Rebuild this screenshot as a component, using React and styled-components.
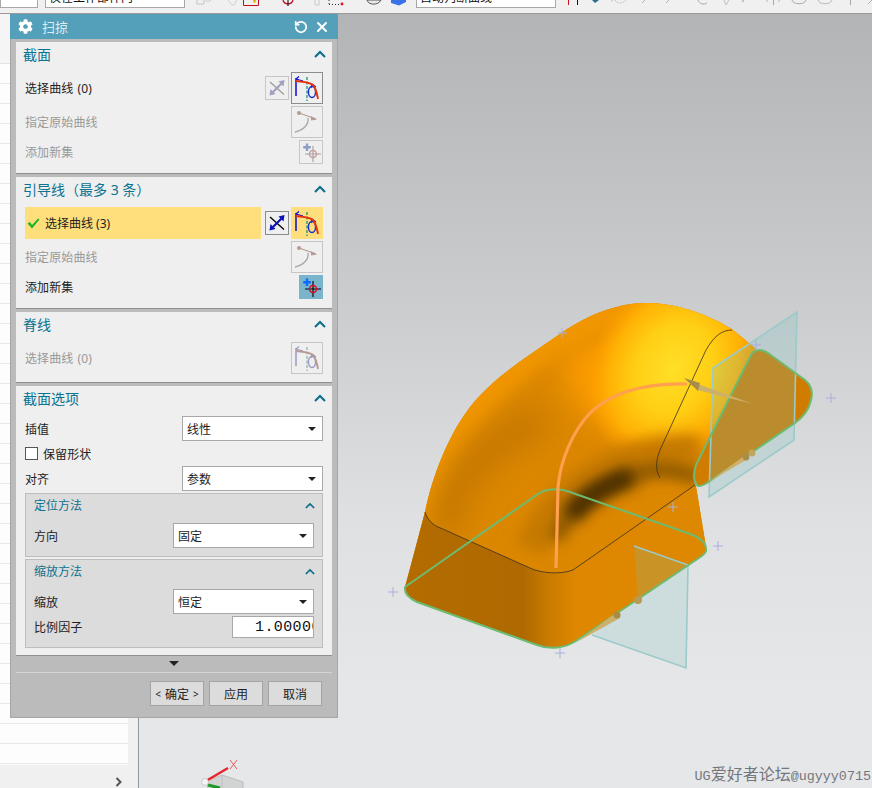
import React from 'react';
import styled, { createGlobalStyle } from 'styled-components';
import { FaCog } from 'react-icons/fa';
import { RotateCcw, X } from 'lucide-react';

const GlobalStyle = createGlobalStyle`
	html, body {
		margin: 0;
		padding: 0;
		background: #f0f0f0;
	}
	* {
		box-sizing: border-box;
	}
`;

const uiFont = `"Noto Sans", "Noto Sans CJK SC", sans-serif`;

/* icons drawn from the reference, one palette per state */
const palettes = {
	on: { blue: '#0a0ad8', red: '#e8300a', teal: '#0a8a7a', circle: '#1030d0' },
	off: { blue: '#9a9ac4', red: '#b89a94', teal: '#8fb0b0', circle: '#9a9ac4' },
};

const CurveIcon = ({ state = 'on' }) => {
	const c = palettes[state];
	return (
		<svg width='30' height='30' viewBox='1 1 30 30' fill='none'>
			<path d='M5 6V24' stroke={c.blue} strokeWidth='1.5' />
			<path d='M5 7L12 9M5 7L8 4.5' stroke={c.blue} strokeWidth='1.3' />
			<path d='M16 5V29' stroke={c.teal} strokeWidth='1.2' strokeDasharray='3 1.5' />
			<ellipse cx='21' cy='20' rx='3.6' ry='5.5' stroke={c.circle} strokeWidth='1.5' />
			<path d='M21 12L25 15M21 12L20 16' stroke={c.circle} strokeWidth='1.2' />
			<path d='M5 9C12 10 18 10 22 13C25 16 26 22 27 27' stroke={c.red} strokeWidth='1.9' />
		</svg>
	);
};

const OriginIcon = () => (
	<svg width='30' height='30' viewBox='1 1 30 30' fill='none'>
		<circle cx='8' cy='7' r='2' fill='#b89a94' />
		<path d='M8 7L25 13' stroke='#b89a94' strokeWidth='1.2' />
		<path d='M20 10L26 13.5L20 14.5Z' fill='#b89a94' />
		<path d='M17 12C18 18 13 24 4 26' stroke='#a8a8a8' strokeWidth='1.3' />
	</svg>
);

const AddSetIcon = ({ state = 'on' }) => {
	const on = state === 'on';
	const plus = on ? '#0a6cff' : '#8f9ec4';
	const cross = on ? '#000' : '#a0a0a0';
	const ring = on ? '#e00a20' : '#c8a0a0';
	return (
		<svg width='22' height='22' viewBox='1 1 22 22' fill='none'>
			<path d='M8 3.5V11M4.2 7.2H11.8' stroke={plus} strokeWidth='2.4' />
			<path d='M6 14H22M14 6V22' stroke={cross} strokeWidth='1.1' />
			<circle cx='14' cy='14' r='3.5' stroke={ring} strokeWidth='1.5' />
		</svg>
	);
};

const ReverseIcon = ({ state = 'on' }) => {
	const on = state === 'on';
	const line = on ? '#000' : '#9c9c9c';
	const arrow = on ? '#0a10b8' : '#a0a0c0';
	return (
		<svg width='22' height='22' viewBox='1 1 22 22' fill='none'>
			<path d='M5 6L19 18.5' stroke={line} strokeWidth='1.3' />
			<path d='M8 16L17 7' stroke={arrow} strokeWidth='2.2' />
			<path d='M19.5 4L18.5 10.5L13.5 5.5Z' fill={arrow} />
			<path d='M4.5 19.5L5.5 13L10.5 18Z' fill={arrow} />
		</svg>
	);
};

const Chevron = ({ small }) => (
	<svg width={small ? 10 : 12} height={small ? 7 : 8} viewBox='0 0 12 8' fill='none'>
		<path d='M1 7L6 2L11 7' stroke='#0b6c8a' strokeWidth='2' />
	</svg>
);

const CheckMark = () => (
	<svg width='13' height='11' viewBox='0 0 13 11'>
		<path d='M0.5 5.5L3 4L5 7L11 0.5L12.5 1.5L5 10.5Z' fill='#1fb52c' />
	</svg>
);

const Select = ({ value }) => (
	<SelectBox>
		{value}
		<Caret />
	</SelectBox>
);

/* top edge of the toolbars, only the lower few pixels of each icon show */
const ToolsLeft = () => (
	<svg width='231' height='13' viewBox='184 0 231 13' fill='none'>
		<path d='M196 0V4H203V0M205 0C205 2 208 2 210 0' stroke='#c4c4c4' />
		<path d='M227 0L231 5H233L236 0' stroke='#d0d0d0' />
		<path d='M242.5 0V5.5H257.5V0' stroke='#c01020' />
		<path d='M252 0H255V1L254 3H253L252 1Z' fill='#f0b010' />
		<path d='M282 0C283 5 291 5 292 0' stroke='#c01020' strokeWidth='1.3' />
		<path d='M287 0V6' stroke='#000' />
		<path d='M314 0V5M318 0V5H314' stroke='#c8c8c8' />
		<path d='M328 4.5H340' stroke='#333' strokeDasharray='1 2' />
		<path d='M328 0V4' stroke='#333' strokeDasharray='1 2' />
		<circle cx='341' cy='4' r='1.4' fill='#e01020' />
		<path d='M366 0C367 5 377 6 380 0Z' fill='#e8e8e8' stroke='#555' />
		<path d='M390 0H405V2L398 5.5L390 3Z' fill='#3a70e8' />
	</svg>
);

const ToolsRight = () => (
	<svg width='318' height='13' viewBox='554 0 318 13' fill='none'>
		<path d='M566.5 0V5' stroke='#d01020' />
		<path d='M575.5 0V5' stroke='#111' />
		<path d='M590 0H597L593 3Z' fill='#2a6a90' />
		<path d='M613 0C615 4 621 4 624 0M610 0V3' stroke='#c0c0c0' strokeDasharray='2 1' />
		<path d='M640 3L643 0M664 3L667 0' stroke='#b0b0b0' />
		<path d='M696 0C697 4 702 5 705 3' stroke='#a8a8a8' />
		<path d='M722 0L724 5L727 0' stroke='#c0c0c0' />
		<circle cx='741' cy='1' r='1.2' fill='#c0c0c0' />
		<path d='M771.5 0V5' stroke='#a8a8a8' />
		<path d='M764 1H766M776 1H778' stroke='#b8b8b8' />
		<path d='M790 0C791 5 803 5 804 0' stroke='#a8a8a8' />
		<path d='M816 0C817 5 829 5 830 0' stroke='#b8b8b8' />
		<path d='M848.5 0V5' stroke='#a8a8a8' />
		<path d='M866 4L870 0' stroke='#b0b0b0' />
	</svg>
);

/* plus marks left by the sweep preview, page coordinates */
const plusMarks = [
	[562, 333],
	[756, 345],
	[831, 398],
	[673, 507],
	[718, 546],
	[393, 592],
	[560, 653],
];

const bodyPath =
	'M405 587L425 512C432 478 447 437 470 407C490 381 520 361 557 336C585 316 615 303 647 303C680 303 715 318 733 330L756 349L752 353L696 465C693 474 693 480 696 486L706 547C706 551 705 553 702 556L576 641C565 648 550 650 537 645L417 602C408 598 404 593 405 587Z';

const blurBox = { filterUnits: 'userSpaceOnUse', x: 139, y: 14, width: 733, height: 774 };

const SweepModel = () => (
	<ModelSvg viewBox='139 14 733 774' fill='none'>
		<defs>
			<clipPath id='bodyClip'>
				<path d={bodyPath} />
			</clipPath>
			<radialGradient id='glow' cx='0.5' cy='0.5' r='0.5'>
				<stop offset='0' stopColor='#ffdf28' />
				<stop offset='0.45' stopColor='#ffcf14' />
				<stop offset='0.75' stopColor='#ffb204' />
				<stop offset='1' stopColor='#ffa000' stopOpacity='0' />
			</radialGradient>
			<linearGradient id='skirt' gradientUnits='userSpaceOnUse' x1='405' y1='560' x2='700' y2='560'>
				<stop offset='0' stopColor='#b46c00' />
				<stop offset='0.4' stopColor='#ae6900' />
				<stop offset='0.48' stopColor='#c87a00' />
				<stop offset='0.58' stopColor='#df8700' />
				<stop offset='1' stopColor='#de8700' />
			</linearGradient>
			<filter id='soft' {...blurBox}>
				<feGaussianBlur stdDeviation='7' />
			</filter>
			<filter id='softer' {...blurBox}>
				<feGaussianBlur stdDeviation='14' />
			</filter>
		</defs>

		{/* bend surface, shaded in bands that follow the spine */}
		<path d={bodyPath} fill='#dc8700' />
		<g clipPath='url(#bodyClip)'>
			<path
				d='M415 530C430 440 490 370 570 325C630 290 700 310 770 350'
				stroke='#f09500'
				strokeWidth='40'
				filter='url(#soft)'
			/>
			<path d='M560 360L680 290L750 340L720 450L630 440L580 410Z' fill='#fb9c00' filter='url(#softer)' />
			<path d='M442 535C452 480 482 445 545 418' stroke='#c87a00' strokeWidth='40' filter='url(#softer)' />
			<ellipse cx='674' cy='368' rx='82' ry='104' transform='rotate(28 674 368)' fill='url(#glow)' />
			<path d='M530 550C555 490 615 448 700 450' stroke='#c67900' strokeWidth='32' filter='url(#soft)' />
			<path
				d='M555 540C570 505 610 478 657 470C670 469 682 472 700 478'
				stroke='#8a5600'
				strokeWidth='15'
				filter='url(#soft)'
			/>
			<path d='M570 516C586 496 605 485 632 476' stroke='#4a2e00' strokeWidth='20' filter='url(#soft)' />
			<path
				d='M400 505L425 512C427 518 430 522 436 526L530 568C540 573 560 575 573 570L695 485L720 560L570 660L400 610Z'
				fill='url(#skirt)'
			/>
		</g>

		{/* seams */}
		<path
			d='M425 512C427 518 430 522 436 526L530 568C540 573 560 575 573 570L695 485'
			stroke='#3a3020'
			strokeWidth='0.8'
		/>
		<path
			d='M732 330C722 330 714 336 706 350L660 450C656 460 655 470 660 478'
			stroke='#3a3020'
			strokeWidth='0.8'
		/>

		{/* end cap */}
		<path
			d='M752 353C757 349 762 349 768 353L805 380C812 386 813 393 811 400C809 410 802 418 795 423L707 483C702 486 698 487 697 485C693 480 693 474 696 465Z'
			fill='#d07c00'
		/>

		{/* section planes */}
		<path d='M713 368L797 312L794 440L709 497Z' fill='#7bc2be' fillOpacity='0.24' />
		<path d='M713 368L797 312L794 440L709 497Z' stroke='#9ccaca' strokeWidth='1.6' />
		<path d='M634 546L688 565L638 600Z' fill='#7bc2be' fillOpacity='0.2' />
		<path d='M688 565L686 668L592 635L638 600Z' fill='#cddcdd' />
		<path d='M634 546L688 565L686 668L592 635' stroke='#9ccaca' strokeWidth='1.6' />

		{/* section outlines */}
		<path
			d='M405 587L538 494C545 489 558 488 567 491L693 535C702 539 707 544 706 551C705 554 702 556 699 558L576 641C565 648 550 650 537 645L417 602C408 598 404 593 405 587Z'
			stroke='#6dbb70'
			strokeWidth='2'
		/>
		<path
			d='M752 353C757 349 762 349 768 353L805 380C812 386 813 393 811 400C809 410 802 418 795 423L707 483C702 486 698 487 697 485C693 480 693 474 696 465Z'
			stroke='#6dbb70'
			strokeWidth='2'
		/>

		{/* guide spine */}
		<path
			d='M556 568L558 487C560 462 572 432 590 413C610 394 640 383 687 384'
			stroke='#ffa04e'
			strokeWidth='3.2'
		/>

		{/* direction arrows */}
		<path d='M698 384L753 404L697 390Z' fill='#cdb06a' />
		<path d='M684 378L700 383L698 391Z' fill='#a88c4a' />
		<path d='M707 483L744 456L746 460Z' fill='#cdb06a' />
		<circle cx='746' cy='457' r='3.4' fill='#a88c4a' />
		<circle cx='752' cy='453' r='3.4' fill='#c2a55c' />
		<path d='M577 642L617 612L620 618Z' fill='#cdb06a' />
		<circle cx='617' cy='615' r='3.6' fill='#a88c4a' />
		<circle cx='638' cy='600' r='4' fill='#b89a50' />

		{plusMarks.map(([x, y]) => (
			<path
				key={`${x}-${y}`}
				d={`M${x - 5} ${y}H${x + 5}M${x} ${y - 5}V${y + 5}`}
				stroke='#aaaedd'
				strokeWidth='1'
			/>
		))}

		{/* view triad */}
		<path d='M222 775L243 782L243 790L208 790L207 781Z' fill='#d2d3d3' stroke='#bcbcbc' strokeWidth='1' />
		<path d='M222 775L222 790' stroke='#c0c0c0' />
		<path d='M206 781L228 768' stroke='#e8252c' strokeWidth='2.4' />
		<path d='M230 760L237 769M237 760L230 769' stroke='#e8454c' strokeWidth='0.9' />
		<path d='M208 785L220 788' stroke='#1f9a2a' strokeWidth='3' />
		<circle cx='205' cy='782' r='3.5' fill='#f4f4f4' stroke='#b0b0b0' strokeWidth='0.6' />
	</ModelSvg>
);

const treeRows = Array.from({ length: 35 });

const App = () => {
	return (
		<Page>
			<GlobalStyle />

			{/* toolbar, clipped by the capture */}
			<Toolbar>
				<Combo $width={38} $gap={7} />
				<Combo $width={140}>仅在工作部件内</Combo>
				<ToolsLeft />
				<Combo $width={140}>自动判断曲线</Combo>
				<ToolsRight />
			</Toolbar>

			<Workspace>
				<TreePanel>
					<TreeHead />
					<TreeRows>
						{treeRows.map((_, i) => (
							<TreeRow key={i} />
						))}
					</TreeRows>
					<TreeScroll>
						<ScrollArrow viewBox='0 0 8 10'>
							<path d='M1.5 1L5.5 5L1.5 9' stroke='#555' strokeWidth='2' fill='none' />
						</ScrollArrow>
					</TreeScroll>
				</TreePanel>
				<Splitter />
				<Viewport>
					<SweepModel />
					<Watermark>
						UG<WatermarkCjk>爱好者论坛</WatermarkCjk>@ugyyy0715
					</Watermark>
				</Viewport>
			</Workspace>

			{/* sweep dialog */}
			<Dialog>
				<TitleBar>
					<TitleLeft>
						<FaCog size={15} />
						<span>扫掠</span>
					</TitleLeft>
					<TitleRight>
						<RotateCcw size={14} strokeWidth={3} />
						<X size={16} strokeWidth={3} />
					</TitleRight>
				</TitleBar>

				<DialogBody>
					<Section>
						<SectionHead>
							<SectionTitle>截面</SectionTitle>
							<Chevron />
						</SectionHead>
						<Rows>
							<Row>
								<Label>选择曲线 (0)</Label>
								<Tools>
									<SmallButton>
										<ReverseIcon state='off' />
									</SmallButton>
									<BigButton $state='selected'>
										<CurveIcon />
									</BigButton>
								</Tools>
							</Row>
							<Row>
								<Label $muted>指定原始曲线</Label>
								<BigButton>
									<OriginIcon />
								</BigButton>
							</Row>
							<Row>
								<Label $muted>添加新集</Label>
								<SmallButton>
									<AddSetIcon state='off' />
								</SmallButton>
							</Row>
						</Rows>
					</Section>

					<Section>
						<SectionHead>
							<SectionTitle>引导线（最多 3 条）</SectionTitle>
							<Chevron />
						</SectionHead>
						<Rows>
							<Row>
								<ActiveLabel>
									<CheckMark />
									<span>选择曲线 (3)</span>
								</ActiveLabel>
								<Tools>
									<SmallButton $state='strong'>
										<ReverseIcon />
									</SmallButton>
									<BigButton $state='active'>
										<CurveIcon />
									</BigButton>
								</Tools>
							</Row>
							<Row>
								<Label $muted>指定原始曲线</Label>
								<BigButton>
									<OriginIcon />
								</BigButton>
							</Row>
							<Row>
								<Label>添加新集</Label>
								<SmallButton $state='pressed'>
									<AddSetIcon />
								</SmallButton>
							</Row>
						</Rows>
					</Section>

					<Section $bottom={8}>
						<SectionHead>
							<SectionTitle>脊线</SectionTitle>
							<Chevron />
						</SectionHead>
						<Rows>
							<Row>
								<Label $muted>选择曲线 (0)</Label>
								<BigButton>
									<CurveIcon state='off' />
								</BigButton>
							</Row>
						</Rows>
					</Section>

					<Section $bottom={7}>
						<SectionHead>
							<SectionTitle>截面选项</SectionTitle>
							<Chevron />
						</SectionHead>
						<OptionRow>
							<Label>插值</Label>
							<Select value='线性' />
						</OptionRow>
						<CheckRow>
							<CheckBox />
							<Label>保留形状</Label>
						</CheckRow>
						<OptionRow>
							<Label>对齐</Label>
							<Select value='参数' />
						</OptionRow>

						<SubPanel>
							<SubHead>
								<SubTitle>定位方法</SubTitle>
								<Chevron small />
							</SubHead>
							<OptionRow>
								<Label>方向</Label>
								<Select value='固定' />
							</OptionRow>
						</SubPanel>

						<SubPanel $last>
							<SubHead>
								<SubTitle>缩放方法</SubTitle>
								<Chevron small />
							</SubHead>
							<OptionRow>
								<Label>缩放</Label>
								<Select value='恒定' />
							</OptionRow>
							<FactorRow>
								<Label>比例因子</Label>
								<NumberBox>1.00000</NumberBox>
							</FactorRow>
						</SubPanel>
					</Section>
				</DialogBody>

				<MoreRow>
					<MoreCaret />
				</MoreRow>
				<Footer>
					<FooterButton>
						<Angle>&lt;</Angle>确定<Angle>&gt;</Angle>
					</FooterButton>
					<FooterButton>应用</FooterButton>
					<FooterButton>取消</FooterButton>
				</Footer>
			</Dialog>
		</Page>
	);
};

export default App;

const Page = styled.div`
	position: relative;
	display: flex;
	flex-direction: column;
	width: 872px;
	height: 788px;
	overflow: hidden;
	font-family: ${uiFont};
	font-size: 12px;
	color: #222;
`;

const Toolbar = styled.div`
	display: flex;
	align-items: flex-end;
	flex: none;
	height: 14px;
	overflow: hidden;
	background: #f0f0f0;
	border-bottom: 1px solid #9a9a9a;

	> svg {
		flex: none;
		align-self: flex-start;
	}
`;

const Combo = styled.div`
	flex: none;
	width: ${(p) => p.$width}px;
	height: 20px;
	margin-right: ${(p) => p.$gap || 0}px;
	margin-bottom: 5px;
	padding: 0 3px;
	line-height: 18px;
	white-space: nowrap;
	overflow: hidden;
	background: #fff;
	border: 1px solid #a8a8a8;
	color: #111;
`;

const Workspace = styled.div`
	display: flex;
	flex: 1;
	min-height: 0;
`;

const TreePanel = styled.div`
	display: flex;
	flex-direction: column;
	flex: none;
	width: 128px;
	background: #fdfdfd;
`;

const TreeHead = styled.div`
	flex: none;
	height: 50px;
	background: #f5f5f5;
	border-bottom: 1px solid #e2e2e2;
`;

const TreeRows = styled.div`
	flex: 1;
	min-height: 0;
	overflow: hidden;
`;

const TreeRow = styled.div`
	height: 20px;
	border-bottom: 1px solid #e8e8e8;
`;

const TreeScroll = styled.div`
	display: flex;
	align-items: center;
	justify-content: flex-end;
	flex: none;
	height: 23px;
	padding: 10px 5px 0 0;
	background: #f0f0f0;
`;

const ScrollArrow = styled.svg`
	width: 8px;
	height: 10px;
`;

const Splitter = styled.div`
	flex: none;
	width: 11px;
	background: #f0f0f0;
	border-right: 1px solid #8c9aa0;
`;

const Viewport = styled.div`
	position: relative;
	flex: 1;
	background: linear-gradient(180deg, #b3b4b6 0%, #cbccce 37%, #dfe0e2 65%, #e6e7e9 88%);
`;

const ModelSvg = styled.svg`
	display: block;
	width: 100%;
	height: 100%;
`;

const Watermark = styled.div`
	position: absolute;
	right: 1px;
	bottom: 3px;
	font-family: 'Liberation Mono', 'Noto Sans CJK SC', monospace;
	font-size: 13.4px;
	line-height: 16px;
	white-space: nowrap;
	color: #73777d;
`;

const WatermarkCjk = styled.span`
	font-size: 16px;
`;

const Dialog = styled.div`
	position: absolute;
	left: 10px;
	top: 14px;
	width: 328px;
	height: 704px;
	background: #bbbbbb;
	border: 1px solid #a6a6a6;
	border-top: 0;
`;

const TitleBar = styled.div`
	display: flex;
	align-items: center;
	justify-content: space-between;
	height: 25px;
	margin: 0 -1px;
	padding: 0 8px 0 8px;
	background: #549fb9;
	color: #fff;
`;

const TitleLeft = styled.div`
	display: flex;
	align-items: center;
	gap: 9px;

	> span {
		font-size: 13px;
		color: #dcecf2;
	}
`;

const TitleRight = styled.div`
	display: flex;
	align-items: center;
	gap: 6px;
`;

const DialogBody = styled.div`
	display: flex;
	flex-direction: column;
	gap: 3px;
	padding: 3px 5px 0;
`;

const Section = styled.section`
	padding: 0 9px ${(p) => p.$bottom ?? 9}px 9px;
	background: #efefef;
	border-bottom: 1px solid #8f8f8f;
`;

const SectionHead = styled.div`
	display: flex;
	align-items: center;
	justify-content: space-between;
	height: 30px;
	margin: 0 -3px 0 -2px;
	padding-bottom: 6px;
`;

const SectionTitle = styled.h4`
	margin: 0;
	font-size: 14px;
	font-weight: 400;
	color: #0b7290;
`;

const Rows = styled.div`
	display: flex;
	flex-direction: column;
	gap: 2px;
`;

const Row = styled.div`
	display: flex;
	align-items: center;
	justify-content: space-between;
`;

const Label = styled.span`
	color: ${(p) => (p.$muted ? '#999' : '#222')};
	white-space: nowrap;
	word-spacing: 1px;
	letter-spacing: 0.1px;
`;

const ActiveLabel = styled.div`
	display: flex;
	align-items: center;
	gap: 5px;
	width: 236px;
	height: 32px;
	padding-left: 2px;
	background: #ffdf7b;
`;

const Tools = styled.div`
	display: flex;
	align-items: center;
	gap: 2px;
`;

const borderByState = {
	selected: '#8c8c8c',
	strong: '#8c8c8c',
	active: '#ffdf7b',
	pressed: '#79b4cc',
};

const bgByState = {
	active: '#ffdf7b',
	pressed: '#79b4cc',
};

const IconButton = styled.button`
	display: flex;
	align-items: center;
	justify-content: center;
	flex: none;
	padding: 0;
	background: ${(p) => bgByState[p.$state] || 'transparent'};
	border: 1px solid ${(p) => borderByState[p.$state] || '#c6c6c6'};
`;

const BigButton = styled(IconButton)`
	width: 32px;
	height: 32px;
`;

const SmallButton = styled(IconButton)`
	width: 24px;
	height: 24px;
`;

const OptionRow = styled.div`
	display: flex;
	align-items: center;
	justify-content: space-between;
`;

const SelectBox = styled.div`
	position: relative;
	display: flex;
	align-items: center;
	width: 141px;
	height: 25px;
	padding-left: 4px;
	background: #fff;
	border: 1px solid #a8a8a8;
`;

const Caret = styled.i`
	position: absolute;
	right: 6px;
	top: 10px;
	border-style: solid;
	border-width: 4px 4px 0;
	border-color: #222 transparent transparent;
`;

const CheckRow = styled.div`
	display: flex;
	align-items: center;
	gap: 5px;
	height: 23px;
	margin: 1px 0;
`;

const CheckBox = styled.span`
	flex: none;
	width: 13px;
	height: 13px;
	background: #fff;
	border: 1px solid #555;
`;

const SubPanel = styled.div`
	margin-top: 2px;
	padding: 0 8px ${(p) => (p.$last ? 9 : 8)}px;
	background: #dcdcdc;
	border: 1px solid #bdbdbd;
`;

const SubHead = styled.div`
	display: flex;
	align-items: center;
	justify-content: space-between;
	height: 29px;
	margin-right: -1px;
	padding-bottom: 7px;
`;

const SubTitle = styled.h5`
	margin: 0;
	font-size: 12px;
	font-weight: 400;
	color: #0b7290;
`;

const FactorRow = styled.div`
	display: flex;
	align-items: center;
	justify-content: space-between;
	margin-top: 2px;
`;

const NumberBox = styled.div`
	width: 82px;
	height: 22px;
	padding-left: 22px;
	overflow: hidden;
	font-family: 'Liberation Mono', monospace;
	font-size: 15px;
	line-height: 21px;
	letter-spacing: 0.4px;
	white-space: nowrap;
	color: #111;
	background: #fff;
	border: 1px solid #a8a8a8;
`;

const MoreRow = styled.div`
	display: flex;
	align-items: center;
	justify-content: center;
	height: 17px;
	margin: 0 5px;
	padding-right: 0;
	border-bottom: 1px solid #d4d4d4;
`;

const MoreCaret = styled.i`
	border-style: solid;
	border-width: 5px 5px 0;
	border-color: #222 transparent transparent;
	margin-bottom: 2px;
`;

const Footer = styled.div`
	display: flex;
	justify-content: flex-end;
	gap: 5px;
	padding: 8px 15px 0 0;
`;

const FooterButton = styled.button`
	display: flex;
	align-items: center;
	justify-content: center;
	gap: 4px;
	width: 54px;
	height: 25px;
	padding: 0;
	font-family: ${uiFont};
	font-size: 12px;
	color: #222;
	background: #dcdcdc;
	border: 1px solid #a4a4a4;
`;

const Angle = styled.span`
	font-size: 10px;
`;
